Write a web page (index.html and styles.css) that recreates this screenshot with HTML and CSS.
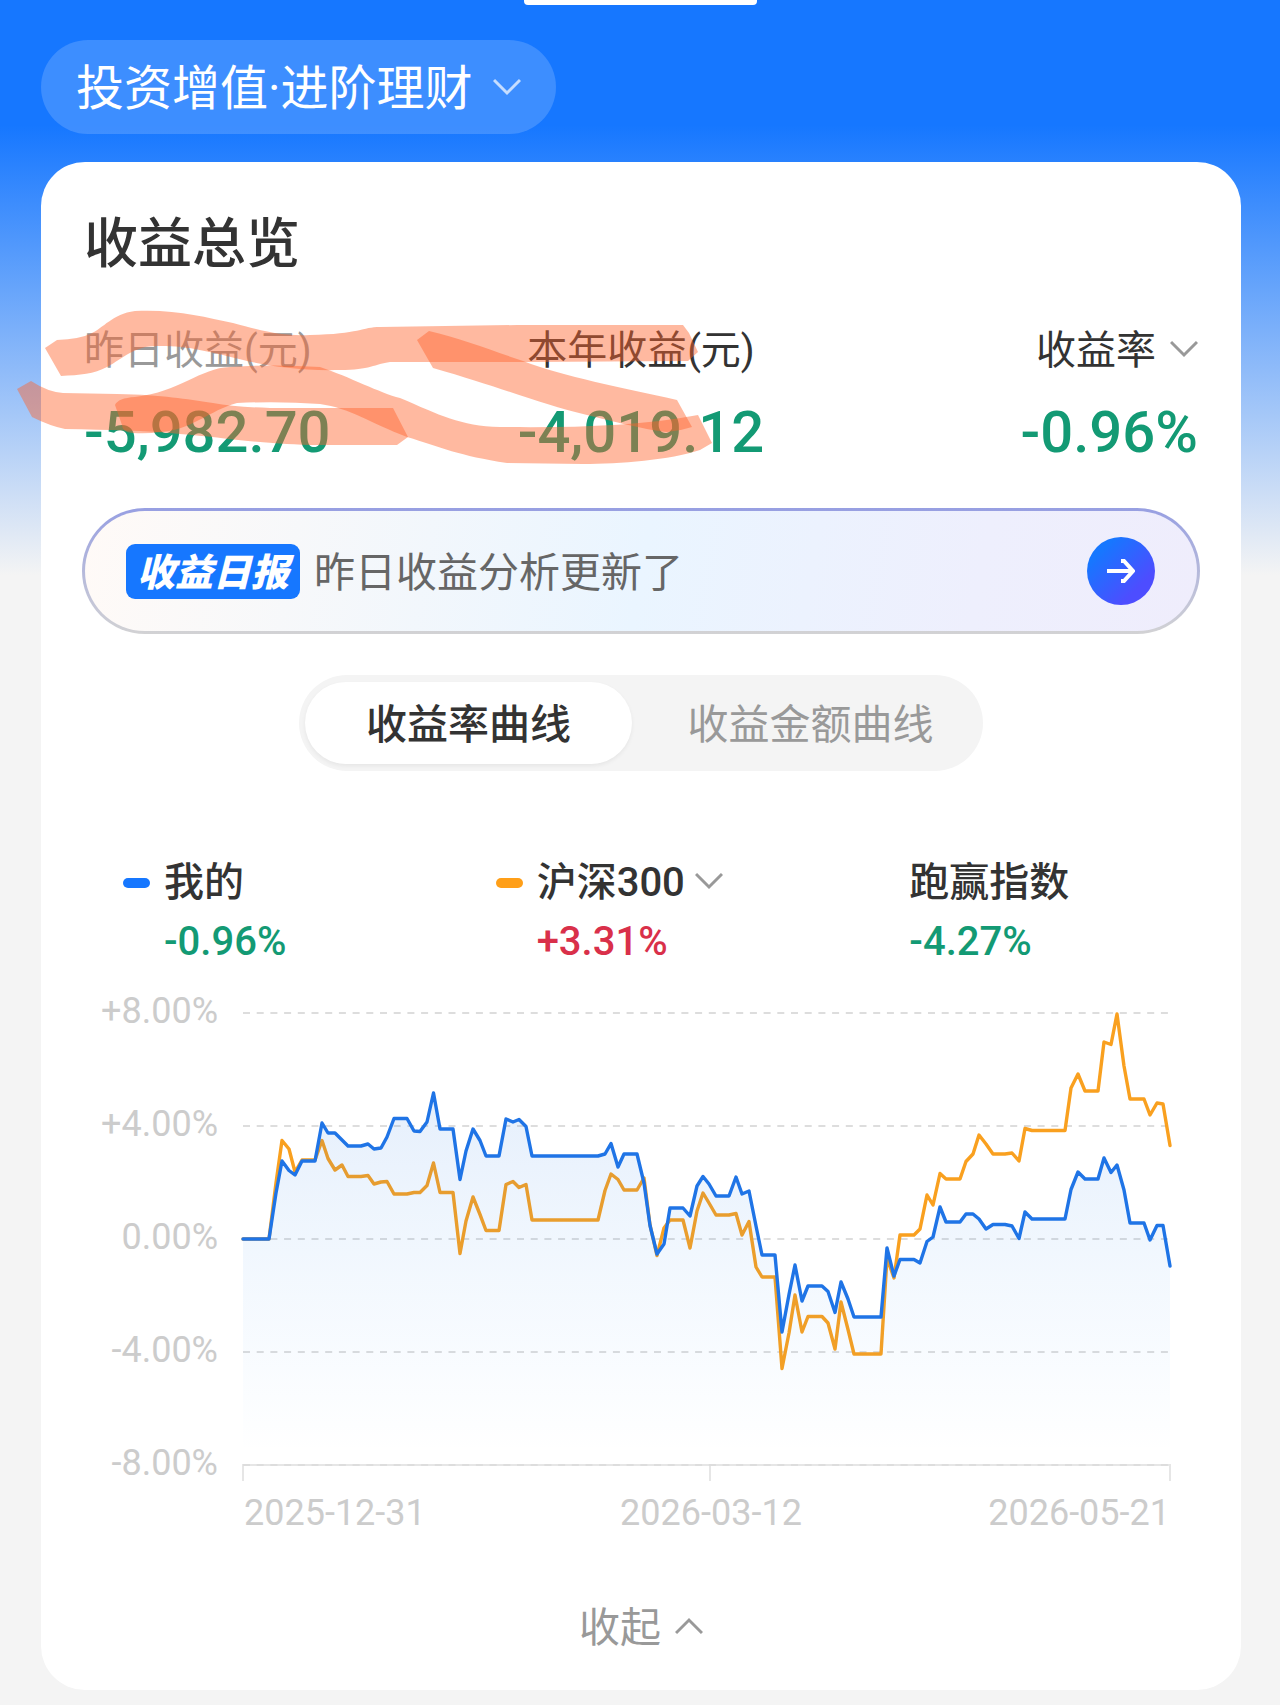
FILE: index.html
```html
<!DOCTYPE html>
<html lang="zh-CN">
<head>
  <meta charset="UTF-8">
  <meta name="viewport" content="width=device-width, initial-scale=1.0">
  <title>收益总览</title>
  <link rel="stylesheet" href="styles.css">
</head>
<body>
  <div class="page">
    <div class="top-handle"></div>

    <header class="header">
      <button class="plan-btn" type="button">
        投资增值·进阶理财
        <svg class="chevron" viewBox="0 0 28 18"><path d="M1 2l13 13L27 2"/></svg>
      </button>
    </header>

    <main class="card">
      <h1 class="title">收益总览</h1>

      <section class="stats">
        <div class="stat">
          <div class="stat-label muted">昨日收益(元)</div>
          <div class="stat-value">-5,982.70</div>
        </div>
        <div class="stat center">
          <div class="stat-label">本年收益(元)</div>
          <div class="stat-value">-4,019.12</div>
        </div>
        <div class="stat right">
          <button class="stat-label" type="button">
            收益率
            <svg class="chevron" viewBox="0 0 28 18"><path d="M1 2l13 13L27 2"/></svg>
          </button>
          <div class="stat-value">-0.96%</div>
        </div>
      </section>

      <a class="report" href="#">
        <span class="report-tag">收益日报</span>
        <span class="report-text">昨日收益分析更新了</span>
        <span class="report-go">
          <svg viewBox="0 0 28 24"><path d="M0 12h25M14 2h3l9 10-9 10h-3"/></svg>
        </span>
      </a>

      <div class="tabs">
        <button class="tab active" type="button">收益率曲线</button>
        <button class="tab" type="button">收益金额曲线</button>
      </div>

      <section class="legend">
        <div class="legend-item">
          <span class="swatch blue"></span>
          <span class="legend-name">我的</span>
          <span class="legend-value">-0.96%</span>
        </div>
        <div class="legend-item">
          <span class="swatch orange"></span>
          <button class="legend-name" type="button">
            沪深300
            <svg class="chevron" viewBox="0 0 28 18"><path d="M1 2l13 13L27 2"/></svg>
          </button>
          <span class="legend-value up">+3.31%</span>
        </div>
        <div class="legend-item">
          <span class="legend-name">跑赢指数</span>
          <span class="legend-value">-4.27%</span>
        </div>
      </section>

      <svg class="chart" viewBox="0 0 1200 550" role="img" aria-label="收益率曲线">
        <defs>
          <linearGradient id="area" gradientUnits="userSpaceOnUse" x1="0" y1="80" x2="0" y2="440">
            <stop offset="0" stop-color="#1a6fe0" stop-opacity="0.11"/>
            <stop offset="1" stop-color="#1a8fff" stop-opacity="0"/>
          </linearGradient>
        </defs>

        <g class="axis-text end">
          <text x="177" y="33">+8.00%</text>
          <text x="177" y="146">+4.00%</text>
          <text x="177" y="259">0.00%</text>
          <text x="177" y="372">-4.00%</text>
          <text x="177" y="485">-8.00%</text>
        </g>

        <g transform="translate(202 23)">
          <path class="axis" d="M0 468V452H927V468M467 452V468"/>
          <path class="grid" d="M0 0H927M0 113H927M0 226H927M0 339H927M0 452H927"/>

          <polyline class="line orange" points="0,226 26,226 33,170 39,127.5 46,136 52,159 59,147 72,147 79,127.5 85,145.5 92,157 99,152 105,163.5 118,163.5 125,162.5 131,171 138,169 144,168.5 151,181 164,181 171,179.5 177,179.5 184,172.5 190.5,150 197,179.5 210,179.5 217,240.5 223,208 230,184 237,201.5 243,217.5 256,217.5 263,171.5 270,168.5 276,174.5 283,171.5 289,207 355,207 362,177.5 368,161 375,166.5 381,177 394,177 401,165 407,212 414,242.5 421,215 427,207 440,207 447,235 454,198 460,180 466,190 473,202 486,202 493,200.5 499,222 506,208.5 513,254 519,264 532,264 539,355.5 546,320 552,282 559,319 565,303.5 579,303.5 585,310 592,336 598,289 605,316.5 611,341 638,341 644,245 651,265 657,222 671,222 677,216 684,182 690,192 697,160.5 703,166 717,166 723,148.5 730,141 736,122 743,131 750,141 762,141 769,140 776,148 782,115.5 789,117.5 822,117.5 828,75 835,61 842,78 855,78 861,29 868,31.5 874,1 881,53 887,86 901,86 907,102 914,90 920,91 927,132.5"/>
          <polygon class="area" points="0,452 0,226 26,226 33,180 39,148 46,157.5 52,162 59,148 72,148 79,110 85,120 92,120 99,127 105,133 118,133 125,131 131,136 138,135 144,124 151,105.5 164,105.5 171,118 177,118.5 184,109 190.5,80 197,116 210,116 217,166.5 223,138 230,116 237,127.5 243,143 256,143 263,106 270,109 276,106.5 283,113.5 289,143 355,143 362,141 368,130.5 375,154 381,141 394,141 401,170 407,212.5 414,241 421,231 427,195 440,195 447,203 454,173 460,163.5 466,171 473,183 486,183 493,164 499,181 506,178 513,213 519,242 532,242 539,319 546,281.5 552,252 559,288 565,273 579,273 585,278.5 592,299.5 598,269 605,286 611,304 638,304 644,235 651,263 657,246.5 671,246.5 677,250 684,228.5 690,224 697,194 703,209 717,209 723,201 730,201 736,206 743,216 750,211.5 762,211.5 769,213 776,225.5 782,199 789,206 822,206 828,176.5 835,159 842,166 855,166 861,145 868,159.5 874,152 881,177 887,210 901,210 907,227 914,212.5 920,212.5 927,253 927,452"/>
          <polyline class="line blue" points="0,226 26,226 33,180 39,148 46,157.5 52,162 59,148 72,148 79,110 85,120 92,120 99,127 105,133 118,133 125,131 131,136 138,135 144,124 151,105.5 164,105.5 171,118 177,118.5 184,109 190.5,80 197,116 210,116 217,166.5 223,138 230,116 237,127.5 243,143 256,143 263,106 270,109 276,106.5 283,113.5 289,143 355,143 362,141 368,130.5 375,154 381,141 394,141 401,170 407,212.5 414,241 421,231 427,195 440,195 447,203 454,173 460,163.5 466,171 473,183 486,183 493,164 499,181 506,178 513,213 519,242 532,242 539,319 546,281.5 552,252 559,288 565,273 579,273 585,278.5 592,299.5 598,269 605,286 611,304 638,304 644,235 651,263 657,246.5 671,246.5 677,250 684,228.5 690,224 697,194 703,209 717,209 723,201 730,201 736,206 743,216 750,211.5 762,211.5 769,213 776,225.5 782,199 789,206 822,206 828,176.5 835,159 842,166 855,166 861,145 868,159.5 874,152 881,177 887,210 901,210 907,227 914,212.5 920,212.5 927,253"/>
        </g>

        <g class="axis-text">
          <text x="203" y="535">2025-12-31</text>
          <text x="670" y="535" text-anchor="middle">2026-03-12</text>
          <text x="1129" y="535" text-anchor="end">2026-05-21</text>
        </g>
      </svg>

      <button class="collapse" type="button">
        收起
        <svg class="chevron" viewBox="0 0 28 18"><path d="M1 16L14 3l13 13"/></svg>
      </button>
    </main>

    <!-- highlighter strokes over the amounts -->
    <svg class="marker" viewBox="0 300 720 170" aria-hidden="true">
      <path d="M45 348L57 340Q80 339 90 334C104 328 112 314 135 311C175 309 205 317 233 323C270 333 285 336 310 335C360 334 362 327 380 327L517 325H683L689 333L698 352L688 361L530 362H390C375 364 370 370 340 370C300 371 270 366 247 361C210 352 190 346 160 346C135 345 125 357 107 367C94 374 80 375 61 376Z"/>
      <path d="M17 389L31 381Q48 392 63 393L117 394C165 395 185 399 213 403Q235 407 270 408H393L408 437L397 445H310C250 443 220 437 180 434C145 430 110 430 65 429Q50 426 32 417Z"/>
      <path d="M115 405Q118 398 135 397C180 392 200 368 230 367Q275 364 320 367C350 377 380 393 400 398C440 415 460 426 500 427C570 428 640 426 698 415L712 443L700 450C670 460 620 464 583 464L507 463C460 456 440 447 407 437C370 423 350 408 320 404Q280 401 237 403C210 410 190 431 160 432Q148 434 133 433Q122 432 122 425Z"/>
      <path d="M417 340L429 331C460 338 490 350 523 361C565 377 620 387 677 400L692 427Q680 431 667 432C645 430 600 418 587 415C540 404 500 387 433 368Z"/>
    </svg>
  </div>
</body>
</html>
```
FILE: styles.css
```css
* {
  margin: 0;
  padding: 0;
  box-sizing: border-box;
}

body {
  font-family: Roboto, "Noto Sans CJK SC", sans-serif;
  font-size: 41px;
  line-height: 48px;
  color: #333;
  background-color: #f4f4f4;
}

button {
  font: inherit;
  color: inherit;
  background: none;
  border: none;
  cursor: pointer;
}

a {
  color: inherit;
  text-decoration: none;
}

.page {
  position: relative;
  padding: 40px 39px 15px 41px;
  background: linear-gradient(#1677ff 125px, #f4f4f4 575px);
}

.top-handle {
  position: absolute;
  top: 0;
  left: 50%;
  width: 233px;
  height: 5px;
  margin-left: -116px;
  background-color: #fff;
  border-radius: 0 0 4px 4px;
}

.chevron {
  width: 28px;
  height: 18px;
  margin-bottom: 4px;
  fill: none;
  stroke: #999;
  stroke-width: 3;
}

.plan-btn {
  display: flex;
  align-items: center;
  gap: 20px;
  height: 94px;
  padding: 4px 35px 0;
  font-size: 48px;
  color: #fff;
  background-color: rgba(255, 255, 255, 0.17);
  border-radius: 47px;
}

.plan-btn .chevron {
  stroke: rgba(255, 255, 255, 0.7);
}

.card {
  margin-top: 28px;
  padding: 53px 0 38px;
  background-color: #fff;
  border-radius: 44px;
}

.title {
  padding: 0 43px;
  font-size: 54px;
  font-weight: 500;
  line-height: 60px;
}

/* totals */
.stats {
  display: grid;
  grid-template-columns: 1fr 1fr 1fr;
  margin-top: 52px;
  padding: 0 43px;
}

.stat {
  display: flex;
  flex-direction: column;
  gap: 25px;
}

.stat.center {
  align-items: center;
}

.stat.right {
  align-items: flex-end;
}

.stat-label {
  display: flex;
  align-items: center;
  gap: 14px;
  font-size: 40px;
}

.stat-label.muted {
  color: #999;
}

.stat-value {
  font-size: 58px;
  font-weight: 500;
  line-height: 64px;
  color: #139a74;
}

/* daily report banner */
.report {
  display: flex;
  align-items: center;
  height: 126px;
  margin: 44px 41px 0;
  padding: 0 42px 0 41px;
  border: 3px solid transparent;
  border-radius: 63px;
  background:
    linear-gradient(100deg, #fffaf7, #eaf5ff 50%, #eeeffd 80%, #efedfc) padding-box,
    linear-gradient(#979fe2, #d2d2d4) border-box;
}

.report-tag {
  width: 174px;
  height: 55px;
  font-size: 38px;
  font-style: italic;
  font-weight: 900;
  line-height: 58px;
  text-align: center;
  color: #fff;
  background-color: #1677ff;
  border-radius: 9px;
}

.report-text {
  margin-left: 14px;
  padding-top: 4px;
  color: #666;
}

.report-go {
  display: flex;
  align-items: center;
  justify-content: center;
  width: 68px;
  height: 68px;
  margin-left: auto;
  background: linear-gradient(135deg, #1677ff 20%, #4d4dff 75%);
  border-radius: 50%;
}

.report-go svg {
  width: 28px;
  height: 24px;
  fill: none;
  stroke: #fff;
  stroke-width: 4;
}

/* tabs */
.tabs {
  display: flex;
  width: 684px;
  height: 96px;
  margin: 41px auto 0;
  padding: 7px 6px;
  background-color: #f4f4f4;
  border-radius: 48px;
}

.tab {
  flex: 1;
  padding: 4px 0 0 12px;
  color: #999;
  border-radius: 41px;
}

.tab.active {
  flex: none;
  width: 327px;
  padding-left: 0;
  font-weight: 500;
  color: #333;
  background-color: #fff;
  box-shadow: 0 2px 4px rgba(0, 0, 0, 0.06);
}

/* legend */
.legend {
  display: grid;
  grid-template-columns: 1fr 1fr 1fr;
  margin-top: 88px;
  padding-left: 82px;
}

.legend-item {
  display: grid;
  grid-template-columns: 27px 1fr;
  column-gap: 14px;
  row-gap: 11px;
  align-items: center;
  justify-items: start;
  font-size: 40px;
  font-weight: 500;
}

.swatch {
  width: 27px;
  height: 10px;
  border-radius: 5px;
}

.swatch.blue {
  background-color: #1677ff;
}

.swatch.orange {
  background-color: #ff9f18;
}

.legend-name {
  grid-column: 2;
  display: flex;
  align-items: center;
  gap: 10px;
}

.legend-value {
  grid-column: 2;
  color: #139a74;
}

.legend-value.up {
  color: #d9304a;
}

/* chart */
.chart {
  display: block;
  width: 100%;
  margin-top: 24px;
}

.axis-text {
  font-size: 36px;
  fill: #ccc;
}

.axis-text.end {
  text-anchor: end;
}

.grid {
  stroke: #ddd;
  stroke-width: 2;
  stroke-dasharray: 7 6.7;
}

.axis {
  fill: none;
  stroke: #e6e6e6;
  stroke-width: 2;
}

.line {
  fill: none;
  stroke-width: 3.4;
  stroke-linejoin: round;
  stroke-linecap: round;
}

.line.blue {
  stroke: #1f74e6;
}

.line.orange {
  stroke: #f9a01f;
}

.area {
  fill: url(#area);
}

.collapse {
  display: flex;
  align-items: center;
  gap: 14px;
  margin: 64px auto 0;
  color: #999;
}

.marker {
  position: absolute;
  top: 300px;
  left: 0;
  width: 720px;
  height: 170px;
  fill: rgba(255, 100, 45, 0.45);
  pointer-events: none;
}
```
